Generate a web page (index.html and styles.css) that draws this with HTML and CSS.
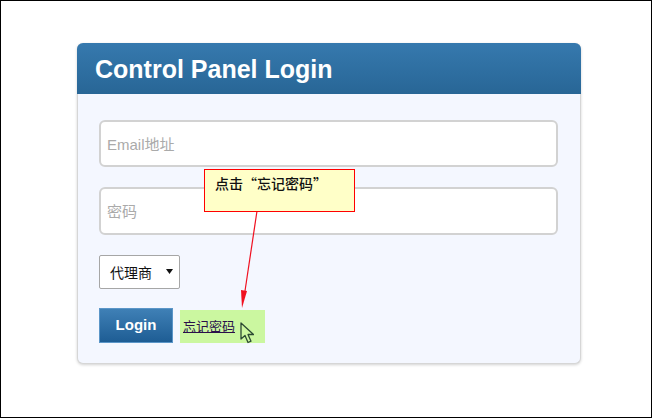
FILE: index.html
```html
<!DOCTYPE html>
<html lang="zh">
<head>
<meta charset="utf-8">
<title>Control Panel Login</title>
<link rel="stylesheet" href="styles.css">
</head>
<body>
<div class="frame">
  <div class="card">
    <div class="card-head"><h1>Control Panel Login</h1></div>
    <form class="card-body">
      <div class="field">Email地址</div>
      <div class="field">密码</div>
      <div class="select"><span>代理商</span><svg class="caret" width="7" height="5" viewBox="0 0 7 5"><path d="M0 0h7L3.5 5z" fill="#111"/></svg></div>
      <div class="actions">
        <div class="btn">Login</div>
        <div class="hl"><a class="forgot">忘记密码</a>
          <svg class="cursor" width="14" height="22" viewBox="0 0 14 22"><path d="M1 1v16l4-3.5 3 7 3-1.3-3-6.7h5.500z" fill="#cdf7a0" stroke="#2c4a33" stroke-width="1.300" stroke-linejoin="round"/></svg>
        </div>
      </div>
    </form>
  </div>
  <svg class="arrow" width="30" height="100" viewBox="0 0 30 100"><path d="M17 1L5 81" stroke="#f01020" stroke-width="1.200" fill="none"/><path d="M1 80l6 1L2 98z" fill="#f01020"/></svg>
  <div class="callout">点击“忘记密码”</div>
</div>
</body>
</html>
```
FILE: styles.css
```css
* { box-sizing: border-box; }
html, body { margin: 0; padding: 0; }
body { width: 652px; height: 418px; overflow: hidden; background: #fff; font-family: "Liberation Sans", "Noto Sans CJK SC", sans-serif; }
.frame { position: relative; width: 652px; height: 418px; border: 1px solid #000; padding: 42px 71px 0 76px; }
.card { width: 504px; height: 321px; border-radius: 6px; background: #f4f7ff; border: 1px solid #d6d6d6; border-top: 0; box-shadow: 0 1px 3px rgba(0,0,0,.18); }
.card-head { height: 51px; margin: 0 -1px; padding: 2px 18px 0; display: flex; align-items: center; border-radius: 6px 6px 0 0; background: linear-gradient(#3679ae, #286696); }
.card-head h1 { margin: 0; color: #fff; font-size: 25px; font-weight: 700; line-height: 49px; }
.card-body { padding: 26px 22px 0 21px; display: flex; flex-direction: column; }
.field { height: 47px; padding-left: 6px; background: #fff; border: 2px solid #d2d2d2; border-radius: 6px; color: #aaa; font-size: 15px; line-height: 45px; margin-bottom: 20px; }
.field + .field { height: 48px; margin-bottom: 19px; }
.select { width: 81px; height: 34px; margin-top: 1px; padding: 0 6px 0 10px; display: flex; align-items: center; justify-content: space-between; background: #fff; border: 1px solid #a6a6a6; border-radius: 2px; color: #111; font-size: 14px; }
.caret { margin-bottom: 2px; }
.actions { display: flex; align-items: flex-end; gap: 7px; margin-top: 19px; }
.btn { width: 74px; height: 35px; padding-bottom: 2px; display: flex; align-items: center; justify-content: center; background: linear-gradient(#3f80b6, #1e5d94); border: 1px solid #5b96c8; color: #fff; font-size: 15px; font-weight: 700; }
.hl { position: relative; width: 85px; height: 33px; padding: 6px 0 0 3px; background: #cbf7a0; font-size: 13px; }
.forgot { color: #2a0f4a; text-decoration: underline; }
.cursor { position: absolute; left: 60px; top: 12px; }
.arrow { position: absolute; left: 239px; top: 209px; }
.callout { position: absolute; left: 203px; top: 168px; width: 151px; height: 43px; padding: 3px 0 0 10px; background: #ffffc8; border: 1px solid #f00; color: #111; font-family: "Noto Sans CJK SC", sans-serif; font-size: 14px; font-weight: 500; }
```
